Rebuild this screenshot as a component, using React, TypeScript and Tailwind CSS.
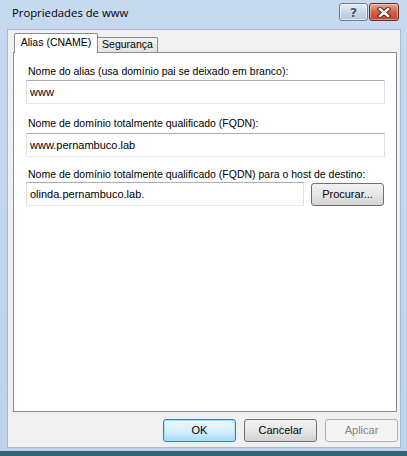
import React from 'react';

function CaptionButtons() {
  return (
    <div className="flex items-start gap-[1px] self-start pt-[3px]">
      <div className="flex h-[18px] w-[29px] items-center justify-center rounded-[3px] border border-[#6f7f95] bg-gradient-to-b from-[#e6eef8] via-[#c9d8ea] to-[#b3c7de] shadow-[inset_0_0_0_1px_rgba(255,255,255,0.55)]">
        <span
          className="font-['DejaVu_Sans',sans-serif] text-[13px] font-bold leading-none text-[#44546a]"
          style={{ textShadow: '0 0 2px #fff, 0 0 1px #fff' }}
        >
          ?
        </span>
      </div>
      <div className="flex h-[18px] w-[30px] items-center justify-center rounded-[3px] border border-[#6b2a22] bg-gradient-to-b from-[#e9a998] via-[#d2614a] to-[#c5432c] shadow-[inset_0_0_0_1px_rgba(255,255,255,0.4)]">
        <svg width="14" height="11" viewBox="0 0 14 11">
          <path d="M3 2 L11 9 M11 2 L3 9" stroke="#5b1a12" strokeWidth="4.4" strokeLinecap="square" />
          <path d="M3 2 L11 9 M11 2 L3 9" stroke="#ffffff" strokeWidth="2.6" strokeLinecap="square" />
        </svg>
      </div>
    </div>
  );
}

function TextBox({ value, className = '' }: { value: string; className?: string }) {
  return (
    <div
      className={`flex h-[24px] items-center border border-[#abadb3] border-b-[#e3e9ef] border-l-[#e2e3ea] border-r-[#dbdfe6] bg-white pl-[3px] text-[11px] text-black ${className}`}
    >
      {value}
    </div>
  );
}

function Button({ label, variant = 'normal' }: { label: string; variant?: 'normal' | 'default' | 'disabled' }) {
  const styles = {
    normal: 'border-[#707070] bg-gradient-to-b from-[#f2f2f2] via-[#e6e6e6] to-[#d2d2d2] text-black',
    default: 'border-[#3c7fb1] bg-gradient-to-b from-[#eaf6fd] via-[#d9f0fc] to-[#a7d9f5] text-black shadow-[inset_0_0_0_1px_#9fe2f8]',
    disabled: 'border-[#adb2b5] bg-[#f4f4f4] text-[#838383]',
  }[variant];
  return (
    <div className={`flex h-[23px] w-[73px] items-center justify-center rounded-[3px] border ${styles}`}>
      {label}
    </div>
  );
}

export default function App() {
  return (
    <div className="h-[456px] w-[407px] overflow-hidden bg-[#2d6675] font-['Liberation_Sans',Arial,sans-serif] text-[11px] text-black">
      <div className="flex h-[452px] flex-col border-b border-[#3f5b74] bg-gradient-to-b from-[#c7d9ef] to-[#bdd3ec]">
        {/* title bar */}
        <div className="flex h-[29px] items-center justify-between pl-[12px] pr-[8px]">
          <span className="pb-[2px] font-['Open_Sans',sans-serif] text-[11.3px] text-black">Propriedades de www</span>
          <CaptionButtons />
        </div>

        {/* client area */}
        <div className="ml-[7px] mr-[6px] flex h-[419px] flex-col border border-[#a5bbd5] bg-[#f0f0f0]">
          {/* tabs */}
          <div className="flex h-[22px] items-end pl-[6px] text-[10.5px]">
            <div className="relative z-10 -mb-px flex h-[20px] w-[84px] items-center justify-center rounded-t-[2px] border border-b-0 border-[#898c95] bg-white pb-[1px]">
              Alias (CNAME)
            </div>
            <div className="-ml-px flex h-[15px] w-[61px] items-center justify-center rounded-t-[2px] border border-b-0 border-[#898c95] bg-gradient-to-b from-[#f3f3f3] to-[#e3e3e3]">
              Segurança
            </div>
          </div>

          {/* tab panel */}
          <div className="ml-[5px] mr-[3px] flex h-[360px] flex-col border border-[#898c95] bg-white pl-[12px] pr-[11px]">
            <div className="ml-[2px] mt-[12px] text-[10.5px] leading-[13px]">
              Nome do alias (usa domínio pai se deixado em branco):
            </div>
            <TextBox value="www" className="mt-[2px]" />

            <div className="ml-[2px] mt-[13px] text-[10.5px] leading-[13px]">
              Nome de domínio totalmente qualificado (FQDN):
            </div>
            <TextBox value="www.pernambuco.lab" className="mt-[3px]" />

            <div className="ml-[2px] mt-[11px] text-[10.5px] leading-[13px]">
              Nome de domínio totalmente qualificado (FQDN) para o host de destino:
            </div>
            <div className="mt-[1px] flex items-center gap-[7px]">
              <TextBox value="olinda.pernambuco.lab." className="w-[278px]" />
              <Button label="Procurar..." />
            </div>
          </div>

          {/* dialog buttons */}
          <div className="mt-[7px] flex justify-end gap-[8px] pr-[2px]">
            <Button label="OK" variant="default" />
            <Button label="Cancelar" />
            <Button label="Aplicar" variant="disabled" />
          </div>
        </div>
      </div>
    </div>
  );
}
